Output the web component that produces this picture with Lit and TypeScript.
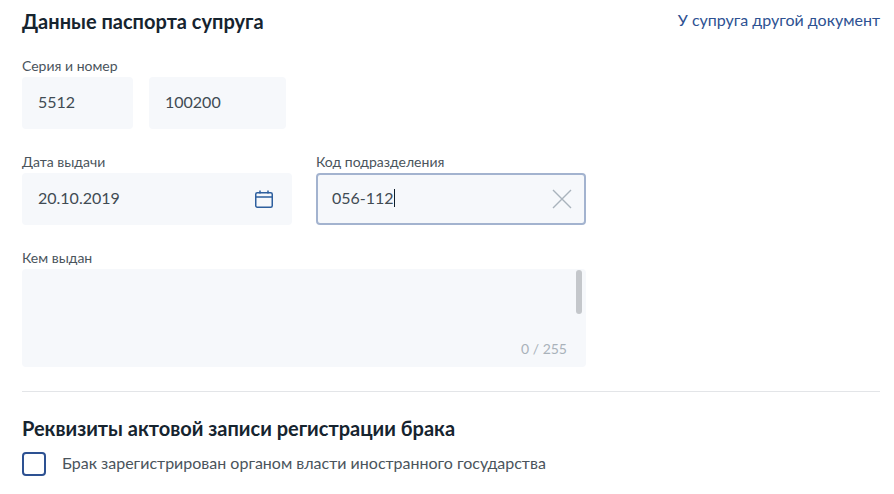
import { LitElement, html, css } from "lit";
import { customElement } from "lit/decorators.js";

@customElement("app-root")
export class AppRoot extends LitElement {
  static styles = css`
    :host {
      display: block;
      width: 894px;
      height: 494px;
      overflow: hidden;
      background: #fff;
      font-family: Lato, "Noto Sans", sans-serif;
      color: #2f3a43;
      box-sizing: border-box;
    }
    .page {
      display: flex;
      flex-direction: column;
      width: 858px;
      margin-left: 22px;
      padding-top: 8px;
    }
    .head {
      display: flex;
      justify-content: space-between;
      align-items: flex-start;
      height: 26px;
      margin-bottom: 23px;
    }
    h2 {
      margin: 0;
      font-size: 20px;
      line-height: 26px;
      font-weight: 700;
      color: #16242f;
    }
    .link {
      font-size: 16px;
      line-height: 22px;
      color: #2d5192;
      font-weight: 400;
      margin-top: 1px;
    }
    .row {
      display: flex;
      gap: 24px;
      margin-bottom: 24px;
    }
    .row.tight {
      gap: 16px;
    }
    .field {
      display: flex;
      flex-direction: column;
    }
    label {
      font-size: 14px;
      line-height: 18px;
      height: 20px;
      color: #4a545c;
    }
    .input {
      box-sizing: border-box;
      display: flex;
      align-items: center;
      justify-content: space-between;
      height: 52px;
      padding: 0 18px 0 16px;
      background: #f6f8fb;
      border-radius: 4px;
      font-size: 16px;
      color: #414b53;
    }
    .t {
      padding-bottom: 4px;
    }
    .w111 { width: 111px; }
    .w137 { width: 137px; }
    .w270 { width: 270px; }
    .w564 { width: 564px; }
    .focus {
      border: 2px solid #a3b3cf;
      padding: 0 12px 0 14px;
    }
    .caret {
      display: inline-block;
      width: 1px;
      height: 18px;
      background: #0f1e2b;
      vertical-align: -3px;
    }
    .ta {
      position: relative;
      box-sizing: border-box;
      height: 98px;
      background: #f6f8fb;
      border-radius: 4px;
    }
    .thumb {
      position: absolute;
      top: 1px;
      right: 4px;
      width: 6px;
      height: 44px;
      border-radius: 3px;
      background: #c4c7cb;
    }
    .count {
      position: absolute;
      right: 19px;
      bottom: 8px;
      font-size: 14px;
      line-height: 20px;
      color: #a9b2ba;
    }
    hr {
      width: 100%;
      margin: 24px 0 23px;
      border: 0;
      height: 1px;
      background: #e3e5e8;
    }
    .sub { margin-bottom: 11px; }
    .check {
      display: flex;
      align-items: center;
      gap: 16px;
      font-size: 16px;
      color: #4a545c;
    }
    .check span {
      padding-bottom: 4px;
    }
    .box {
      box-sizing: border-box;
      width: 24px;
      height: 24px;
      border: 2px solid #2d5192;
      border-radius: 4px;
      background: #fff;
    }
    svg { display: block; flex: none; }
  `;

  render() {
    return html`
      <div class="page">
        <div class="head">
          <h2>Данные паспорта супруга</h2>
          <span class="link">У супруга другой документ</span>
        </div>
        <div class="field">
          <label>Серия и номер</label>
          <div class="row tight">
            <div class="input w111"><span class="t">5512</span></div>
            <div class="input w137"><span class="t">100200</span></div>
          </div>
        </div>
        <div class="row">
          <div class="field">
            <label>Дата выдачи</label>
            <div class="input w270">
              <span class="t">20.10.2019</span>
              <svg width="20" height="20" viewBox="0 0 20 20" fill="none" stroke="#2d5f9e" stroke-width="1.5">
                <rect x="1.75" y="3.75" width="16.5" height="14.5" rx="1.5"></rect>
                <path d="M2 8h16M6 1.5v3M14 1.5v3"></path>
              </svg>
            </div>
          </div>
          <div class="field">
            <label>Код подразделения</label>
            <div class="input w270 focus">
              <span class="t">056-112<span class="caret"></span></span>
              <svg width="20" height="20" viewBox="0 0 20 20" fill="none" stroke="#a9b3bc" stroke-width="1.4">
                <path d="M1 1l18 18M19 1L1 19"></path>
              </svg>
            </div>
          </div>
        </div>
        <div class="field">
          <label>Кем выдан</label>
          <div class="ta w564">
            <div class="thumb"></div>
            <div class="count">0 / 255</div>
          </div>
        </div>
        <hr />
        <h2 class="sub">Реквизиты актовой записи регистрации брака</h2>
        <div class="check">
          <div class="box"></div>
          <span>Брак зарегистрирован органом власти иностранного государства</span>
        </div>
      </div>
    `;
  }
}
